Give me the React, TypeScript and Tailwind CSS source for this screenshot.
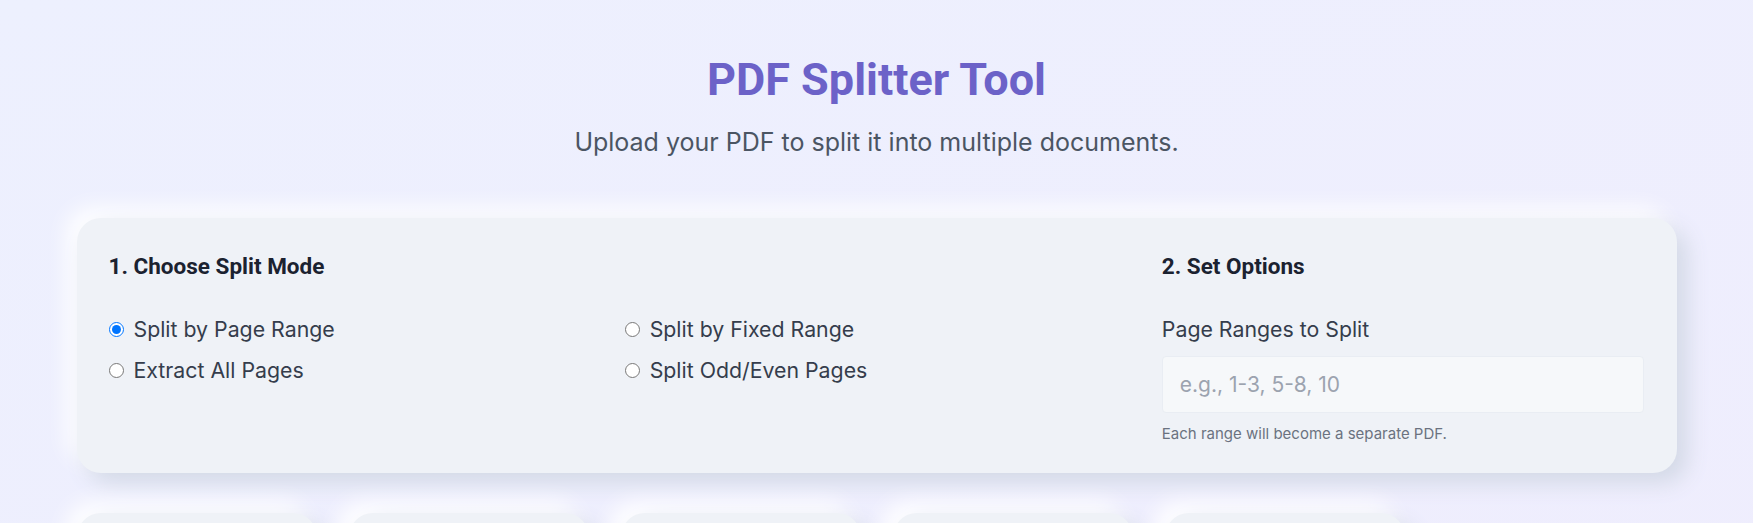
import { useState } from "react";

const modes = [
  { id: "range", label: "Split by Page Range" },
  { id: "fixed", label: "Split by Fixed Range" },
  { id: "all", label: "Extract All Pages" },
  { id: "oddeven", label: "Split Odd/Even Pages" },
];

const neu = "bg-[#eff2f7] shadow-[10px_10px_22px_#d3d9e6,-10px_-10px_22px_#ffffff]";

export default function App() {
  const [mode, setMode] = useState("range");
  const [ranges, setRanges] = useState("");

  return (
    <div
      className="min-h-screen bg-gradient-to-br from-[#edf0fe] to-[#efedfd] pt-[53px] pb-16"
      style={{ fontFamily: "Inter, 'Noto Sans', sans-serif" }}
    >
      <header className="text-center">
        <h1 className="font-['Roboto',sans-serif] text-[45px] leading-[54px] font-bold text-[#6c62c8]">
          PDF Splitter Tool
        </h1>
        <p className="mt-[17px] text-[25px] leading-[36px] text-[#4b5563]">
          Upload your PDF to split it into multiple documents.
        </p>
      </header>

      <main className="mx-auto mt-[58px] max-w-[1600px]">
        {/* Options panel */}
        <section className={`${neu} rounded-3xl grid grid-cols-3 gap-x-11 px-8 pt-8 pb-[30px]`}>
          <div className="col-span-2">
            <h2 className="font-['Roboto',sans-serif] text-[22.5px] leading-8 font-bold text-[#1b2230] mb-8">
              1. Choose Split Mode
            </h2>
            <div className="grid grid-cols-2 gap-x-[23px] gap-y-[11px]">
              {modes.map((m) => (
                <label
                  key={m.id}
                  className="flex items-center gap-[10px] text-[21.3px] leading-[30px] text-[#353d4c] cursor-pointer"
                >
                  <input
                    type="radio"
                    name="mode"
                    className="w-[15px] h-[15px] shrink-0"
                    checked={mode === m.id}
                    onChange={() => setMode(m.id)}
                  />
                  {m.label}
                </label>
              ))}
            </div>
          </div>

          <div>
            <h2 className="font-['Roboto',sans-serif] text-[22.5px] leading-8 font-bold text-[#1b2230] mb-8">
              2. Set Options
            </h2>
            <label className="block text-[21.3px] leading-[30px] text-[#353d4c] mb-3">Page Ranges to Split</label>
            <input
              type="text"
              value={ranges}
              onChange={(e) => setRanges(e.target.value)}
              placeholder="e.g., 1-3, 5-8, 10"
              className="w-full h-[57px] px-[17px] text-[21px] bg-[#f6f8fa] border border-[#e9edf3] rounded-sm text-[#374151] placeholder:text-[#9ca3af] outline-none"
            />
            <p className="mt-[12px] text-[15px] leading-[18px] text-[#6b7280]">Each range will become a separate PDF.</p>
          </div>
        </section>

        {/* Result cards */}
        <div className="mt-10 grid grid-cols-6 gap-8">
          {[1, 2, 3, 4, 5].map((i) => (
            <div key={i} className={`${neu} h-44 rounded-3xl`} />
          ))}
        </div>
      </main>
    </div>
  );
}
